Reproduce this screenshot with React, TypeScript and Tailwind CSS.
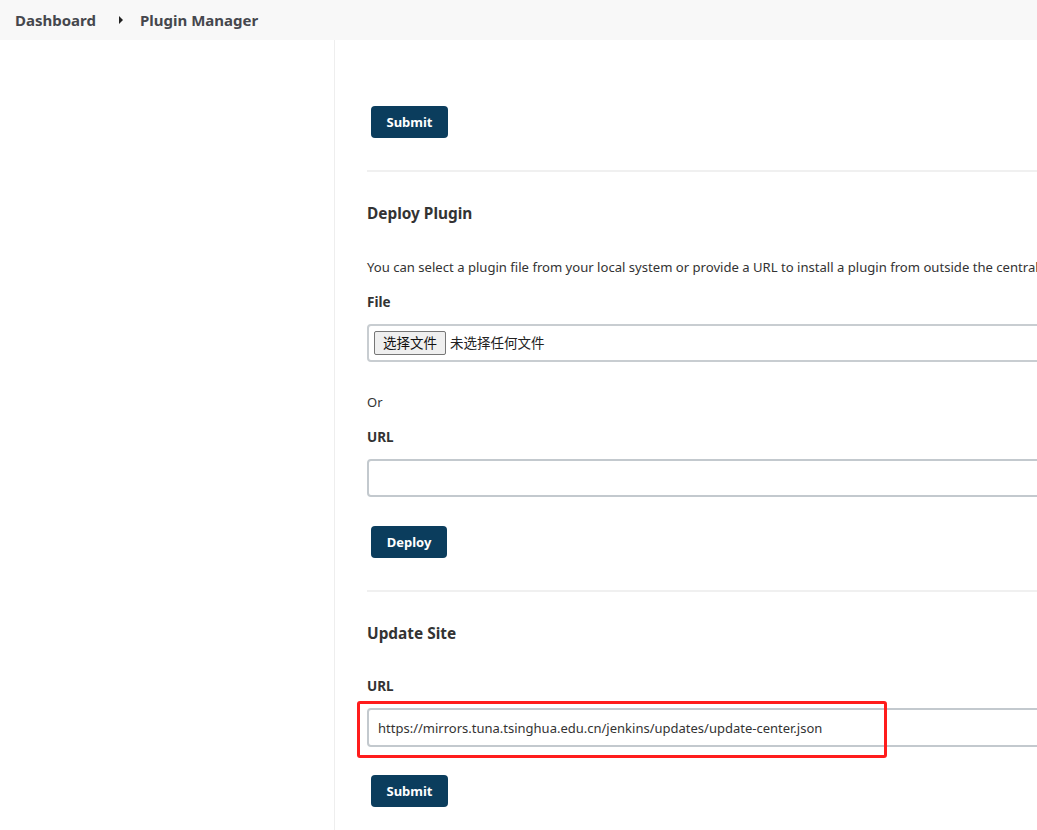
export default function App() {
  const font = { fontFamily: '"Noto Sans", "Noto Sans CJK SC", sans-serif' };

  return (
    <div
      className="flex h-[830px] w-[1037px] flex-col overflow-hidden bg-white text-[#333]"
      style={font}
    >
      {/* breadcrumb bar */}
      <div className="flex h-10 shrink-0 items-center bg-[#f8f8f8] pl-[15px] text-[15px] font-bold text-[#45474d]">
        <span>Dashboard</span>
        <svg className="ml-[23px] mr-[17px] h-2 w-1" viewBox="0 0 4 8" aria-hidden="true">
          <path d="M0 0 L4 4 L0 8 Z" fill="#222" />
        </svg>
        <span>Plugin Manager</span>
      </div>

      <div className="flex flex-1">
        <aside className="w-[335px] shrink-0 border-r border-[#eeeeee]" />

        <main className="min-w-0 flex-1 overflow-hidden pl-8 pt-[66px]">
          <button className="ml-1 h-8 w-[77px] rounded-[4px] bg-[#0b3d5d] pt-px text-[13px] font-bold text-white">
            Submit
          </button>

          <div className="mt-8 h-[2px] w-[900px] bg-[#f0f0f0]" />

          <h2 className="mt-[30px] text-[15.4px] leading-6 font-bold">Deploy Plugin</h2>
          <p className="mt-[31px] whitespace-nowrap text-[13.1px] leading-5">
            You can select a plugin file from your local system or provide a URL to install a plugin from outside the central plugin repository.
          </p>

          <div className="mt-[15px] text-[13.5px] leading-5 font-bold">File</div>
          <div className="mt-3 flex h-[38px] w-[900px] items-center rounded-[4px] border-2 border-[#c8cdd1] pl-[5px] text-[13.5px]">
            <span className="flex h-6 w-[72px] items-center justify-center rounded-[2px] border border-[#767676] bg-[#efefef] text-[#111]">
              选择文件
            </span>
            <span className="ml-[4px] text-[#222]">未选择任何文件</span>
          </div>

          <div className="mt-[30px] text-[13px] leading-5">Or</div>
          <div className="mt-[15px] text-[13.5px] leading-5 font-bold">URL</div>
          <input
            className="mt-3 block h-[38px] w-[900px] rounded-[4px] border-2 border-[#c3c9ce] outline-none"
            type="text"
          />

          <button className="ml-1 mt-[29px] h-8 w-[76px] rounded-[4px] bg-[#0b3d5d] pt-px text-[13px] font-bold text-white">
            Deploy
          </button>

          <div className="mt-8 h-[2px] w-[900px] bg-[#f0f0f0]" />

          <h2 className="mt-[30px] text-[15.4px] leading-6 font-bold">Update Site</h2>
          <div className="mt-[30px] text-[13.5px] leading-5 font-bold">URL</div>

          <div className="relative mt-3 w-[900px]">
            <input
              className="block h-[39px] w-full rounded-[4px] border-2 border-[#c3c9ce] px-[9px] text-[13px] text-[#333] outline-none"
              type="text"
              defaultValue="https://mirrors.tuna.tsinghua.edu.cn/jenkins/updates/update-center.json"
            />
            <div className="pointer-events-none absolute left-[-10px] top-[-7px] h-[57px] w-[530px] rounded-[3px] border-[3px] border-[#ff1c1c]" />
          </div>

          <button className="ml-1 mt-[28px] h-8 w-[77px] rounded-[4px] bg-[#0b3d5d] pt-px text-[13px] font-bold text-white">
            Submit
          </button>
        </main>
      </div>
    </div>
  );
}
